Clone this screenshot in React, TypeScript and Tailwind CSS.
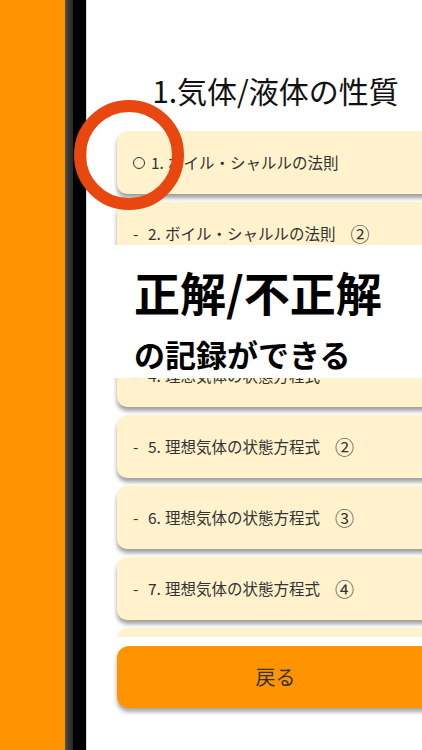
const items = [
  { mark: "○", no: "1.", title: "ボイル・シャルルの法則", sub: "" },
  { mark: "-", no: "2.", title: "ボイル・シャルルの法則", sub: "②" },
  { mark: "-", no: "3.", title: "ボイル・シャルルの法則", sub: "③" },
  { mark: "-", no: "4.", title: "理想気体の状態方程式", sub: "" },
  { mark: "-", no: "5.", title: "理想気体の状態方程式", sub: "②" },
  { mark: "-", no: "6.", title: "理想気体の状態方程式", sub: "③" },
  { mark: "-", no: "7.", title: "理想気体の状態方程式", sub: "④" },
  { mark: "-", no: "8.", title: "理想気体の状態方程式", sub: "⑤" },
];

function Row({ mark, no, title, sub }: (typeof items)[number]) {
  return (
    <div className="mb-[8px] flex h-[63px] shrink-0 items-center rounded-[10px] bg-[#fff2cc] pl-[16px] text-[15.5px] text-[#333] shadow-[0_4px_4px_rgba(0,0,0,0.38)]">
      {mark === "○" ? (
        <span className="mr-[6px] inline-block h-[12px] w-[12px] rounded-full border-[1.5px] border-[#333]" />
      ) : (
        <span className="w-[15px]">-</span>
      )}
      <span>{no}</span>
      <span className="ml-[4px]">{title}</span>
      {sub && <span className="ml-[15px] text-[19px] leading-none">{sub}</span>}
    </div>
  );
}

export default function App() {
  return (
    <div className="relative flex h-[750px] w-[422px] overflow-hidden bg-[#ff9400] font-['Noto_Sans_CJK_JP',sans-serif]">
      <div className="w-[65px] shrink-0" />
      <div className="w-[8px] shrink-0 bg-[linear-gradient(90deg,#555,#3a3a3a_40%,#2a2a2a)]" />
      <div className="w-[13px] shrink-0 bg-black" />

      <div className="relative flex w-[378px] shrink-0 flex-col border-l border-[#d8d8d8] bg-white">
        <h1 className="mt-[73px] h-[34px] text-center text-[30px] leading-[34px] font-normal text-[#111]">
          1.気体/液体の性質
        </h1>

        <div className="mt-[24px] flex h-[506px] flex-col overflow-hidden px-[30px]">
          {items.map((it) => (
            <Row key={it.no} {...it} />
          ))}
        </div>

        <div className="px-[30px] pt-[9px]">
          <button className="flex h-[62px] w-full items-center justify-center rounded-[12px] bg-[#ff9400] text-[20px] text-[#333] shadow-[0_4px_4px_rgba(0,0,0,0.35)]">
            戻る
          </button>
        </div>

        <div className="absolute top-[245px] right-0 left-0 h-[133px] bg-white pt-[23px] pl-[47px] font-bold text-black">
          <p className="text-[46px] leading-[46px]">正解/不正解</p>
          <p className="mt-[24px] text-[31px] leading-[31px]">の記録ができる</p>
        </div>
      </div>

      <div className="absolute top-[100px] left-[74px] h-[110px] w-[110px] rounded-full border-[12px] border-[#e8470f]" />
    </div>
  );
}
